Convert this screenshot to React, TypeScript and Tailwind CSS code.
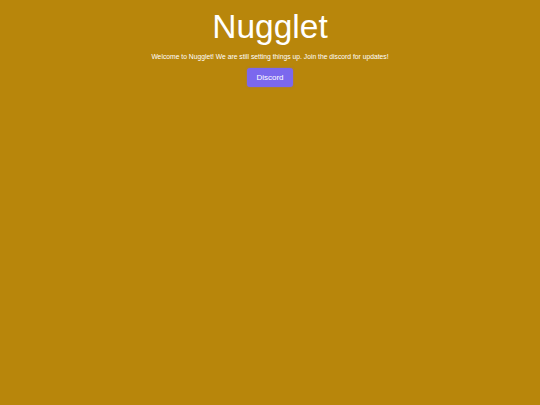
export default function App() {
  return (
    <div className="min-h-screen w-full bg-[#b8860b] text-white" style={{ fontFamily: '"Liberation Sans", Arial, sans-serif' }}>
      <div className="flex flex-col items-center pt-[6px]">
        <h1 className="text-[33.5px] leading-[42px]">Nugglet</h1>
        <p className="mt-[4px] text-[6.75px] leading-[10px]">
          Welcome to Nugglet! We are still setting things up. Join the discord for updates!
        </p>
        <button className="mt-[6px] h-[19px] w-[46px] rounded-[3px] bg-[#7b68ee] text-[8px] text-white shadow-[0_0_2px_rgba(123,104,238,0.6)]">
          Discord
        </button>
      </div>
    </div>
  );
}
